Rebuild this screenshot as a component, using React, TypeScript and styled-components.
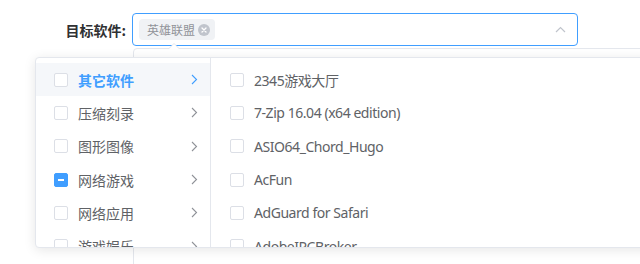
import { FC } from 'react';
import styled, { createGlobalStyle } from 'styled-components';

const GlobalStyle = createGlobalStyle`
    html, body {
        margin: 0;
        padding: 0;
        background: #fff;
    }
    body {
        font-family: "Noto Sans", "Noto Sans CJK SC", sans-serif;
        -webkit-font-smoothing: antialiased;
    }
`;

const categories = [
    { name: '其它软件', active: true, state: 'none' },
    { name: '压缩刻录', active: false, state: 'none' },
    { name: '图形图像', active: false, state: 'none' },
    { name: '网络游戏', active: false, state: 'half' },
    { name: '网络应用', active: false, state: 'none' },
    { name: '游戏娱乐', active: false, state: 'none' },
];

const softwares = [
    '2345游戏大厅',
    '7-Zip 16.04 (x64 edition)',
    'ASIO64_Chord_Hugo',
    'AcFun',
    'AdGuard for Safari',
    'AdobeIPCBroker',
];

export default function App() {
    return (
        <>
            <GlobalStyle />
            <Page>
                <FormItem>
                    <Label>目标软件:</Label>
                    <SelectBox>
                        <Tag>
                            英雄联盟
                            <TagClose>
                                <svg width='8' height='8' viewBox='0 0 8 8'>
                                    <path d='M2 2 L6 6 M6 2 L2 6' stroke='#fff' strokeWidth='1.3' strokeLinecap='round' />
                                </svg>
                            </TagClose>
                        </Tag>
                        <Caret>
                            <svg width='11' height='7' viewBox='0 0 11 7'>
                                <polyline points='1,6 5.5,1.5 10,6' fill='none' stroke='#c0c4cc' strokeWidth='1.2' />
                            </svg>
                        </Caret>
                    </SelectBox>
                </FormItem>

                {/* popper of the select, lies under the cascader panel */}
                <Popper>
                    <PopperArrow />
                </Popper>

                <Panel>
                    <Menu $first>
                        {categories.map((c) => (
                            <MenuItem key={c.name} $active={c.active} $padLeft={18}>
                                <Checkbox $half={c.state === 'half'} />
                                <ItemLabel $active={c.active}>{c.name}</ItemLabel>
                                <Chevron $active={c.active} />
                            </MenuItem>
                        ))}
                    </Menu>
                    <Menu>
                        {softwares.map((s) => (
                            <MenuItem key={s} $padLeft={19}>
                                <Checkbox />
                                <ItemLabel $tight>{s}</ItemLabel>
                            </MenuItem>
                        ))}
                    </Menu>
                </Panel>
            </Page>
        </>
    );
}

const Chevron: FC<{ $active?: boolean }> = ({ $active }) => (
    <ArrowWrap>
        <svg width='7' height='11' viewBox='0 0 7 11'>
            <polyline points='1,1 5.5,5.5 1,10' fill='none' stroke={$active ? '#409eff' : '#909399'} strokeWidth='1.1' />
        </svg>
    </ArrowWrap>
);

const Page = styled.div`
    position: relative;
    width: 640px;
    height: 264px;
    overflow: hidden;
`;

const FormItem = styled.div`
    display: flex;
    align-items: center;
    padding-top: 13px;
`;

const Label = styled.div`
    width: 132px;
    box-sizing: border-box;
    padding-right: 6px;
    text-align: right;
    font-size: 14px;
    font-weight: 700;
    color: #303133;
    font-family: "Noto Sans CJK SC", sans-serif;
`;

const SelectBox = styled.div`
    width: 446px;
    height: 33px;
    box-sizing: border-box;
    border: 1px solid #409eff;
    border-radius: 4px;
    display: flex;
    align-items: center;
    padding: 0 6px;
`;

const Tag = styled.span`
    display: inline-flex;
    align-items: center;
    gap: 3px;
    height: 21px;
    padding: 0 5px 0 8px;
    background: #f0f2f5;
    border-radius: 4px;
    color: #909399;
    font-size: 12px;
    font-family: "Noto Sans CJK SC", sans-serif;
`;

const TagClose = styled.span`
    width: 12px;
    height: 12px;
    border-radius: 50%;
    background: #c0c4cc;
    display: inline-flex;
    align-items: center;
    justify-content: center;
`;

const Caret = styled.span`
    margin-left: auto;
    margin-right: 5px;
    display: flex;
    align-items: center;
`;

const Popper = styled.div`
    position: absolute;
    left: 133px;
    top: 48px;
    width: 540px;
    height: 240px;
    border: 1px solid #e4e7ed;
    border-radius: 4px;
    background: #fff;
`;

const PopperArrow = styled.div`
    position: absolute;
    left: 34px;
    top: -6px;
    width: 0;
    height: 0;
    border-left: 6px solid transparent;
    border-right: 6px solid transparent;
    border-bottom: 6px solid #e4e7ed;

    &::after {
        content: '';
        position: absolute;
        left: -5px;
        top: 1px;
        border-left: 5px solid transparent;
        border-right: 5px solid transparent;
        border-bottom: 5px solid #fff;
    }
`;

const Panel = styled.div`
    position: absolute;
    left: 35px;
    top: 57px;
    width: 640px;
    height: 191px;
    box-sizing: border-box;
    border: 1px solid #e4e7ed;
    border-radius: 4px;
    background: #fff;
    box-shadow: 0 2px 12px 0 rgba(0, 0, 0, 0.1);
    display: flex;
    overflow: hidden;
`;

const Menu = styled.ul<{ $first?: boolean }>`
    margin: 0;
    padding: 5px 0;
    list-style: none;
    width: ${(p) => (p.$first ? '174px' : 'auto')};
    flex: ${(p) => (p.$first ? 'none' : '1')};
    border-right: ${(p) => (p.$first ? '1px solid #e4e7ed' : 'none')};
    overflow: hidden;
`;

const MenuItem = styled.li<{ $active?: boolean; $padLeft: number }>`
    height: 33.3px;
    display: flex;
    align-items: center;
    padding-left: ${(p) => p.$padLeft}px;
    padding-right: 12px;
    background: ${(p) => (p.$active ? '#f5f7fa' : 'transparent')};
`;

const Checkbox = styled.span<{ $half?: boolean }>`
    position: relative;
    flex: none;
    width: 14px;
    height: 14px;
    box-sizing: border-box;
    border: 1px solid ${(p) => (p.$half ? '#409eff' : '#dcdfe6')};
    border-radius: 2px;
    background: ${(p) => (p.$half ? '#409eff' : '#fff')};

    &::after {
        content: '';
        display: ${(p) => (p.$half ? 'block' : 'none')};
        position: absolute;
        left: 3px;
        right: 3px;
        top: 5px;
        height: 2px;
        background: #fff;
    }
`;

const ItemLabel = styled.span<{ $active?: boolean; $tight?: boolean }>`
    margin-left: 10px;
    font-size: 14px;
    white-space: nowrap;
    letter-spacing: ${(p) => (p.$tight ? '-0.45px' : '0')};
    color: ${(p) => (p.$active ? '#409eff' : '#606266')};
    font-weight: ${(p) => (p.$active ? 700 : 400)};
`;

const ArrowWrap = styled.span`
    margin-left: auto;
    display: flex;
    align-items: center;
`;
